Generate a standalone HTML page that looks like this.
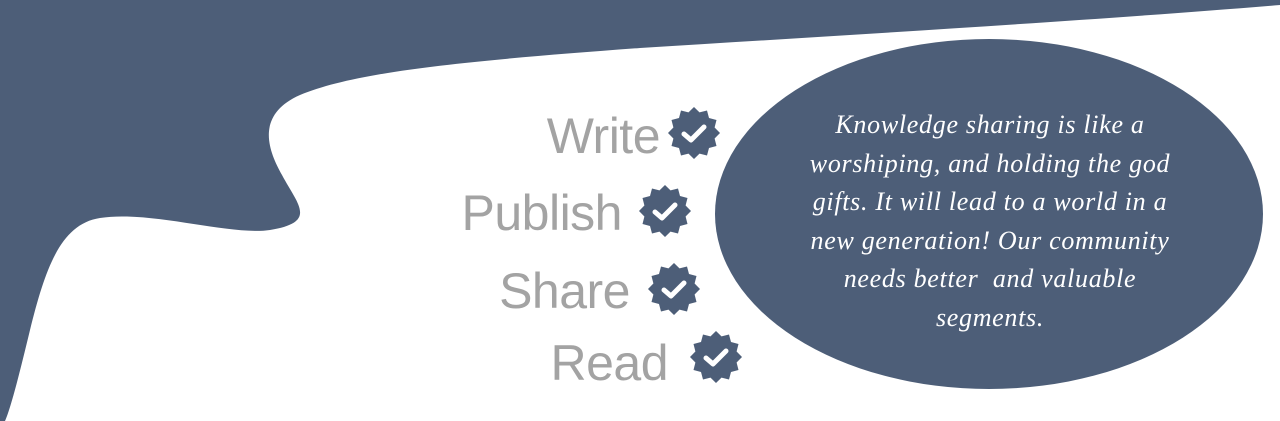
<!DOCTYPE html>
<html><head><style>
html,body{margin:0;padding:0;background:#fff;width:1280px;height:421px;overflow:hidden;position:relative;font-family:"Liberation Sans",sans-serif}
.lbl{position:absolute;color:#a3a3a3;font-size:50px;line-height:1;text-align:right;letter-spacing:-0.5px}
.q{position:absolute;left:740px;width:500px;top:106px;color:#fff;font-family:"Liberation Serif",serif;font-style:italic;font-size:26px;letter-spacing:0.7px;line-height:38.5px;text-align:center}
svg.b{position:absolute;width:52px;height:52px}
</style></head><body>
<svg width="1280" height="421" style="position:absolute;left:0;top:0">
<path fill="#4d5e78" d="M0,0 L1280,0 L1280,5 C1100,20 850,35 640,48 C480,60 360,70 300,95 C255,115 268,150 282,175 C298,205 318,222 270,230 C230,236 150,210 100,218 C60,224 45,270 30,330 C18,380 10,410 5,421 L0,421 Z"/>
<ellipse cx="989" cy="214" rx="274" ry="175" fill="#4d5e78"/>
</svg>
<div class="lbl" style="right:620px;top:111px">Write</div>
<div class="lbl" style="right:658px;top:188px">Publish</div>
<div class="lbl" style="right:650px;top:266px">Share</div>
<div class="lbl" style="right:612px;top:338px">Read</div>
<svg style="display:none"><defs><g id="bd"><polygon fill="#4d5e78" points="26,0 31.5,5.4 39,3.5 41,11 48.5,13 46.6,20.5 52,26 46.6,31.5 48.5,39 41,41 39,48.5 31.5,46.6 26,52 20.5,46.6 13,48.5 11,41 3.5,39 5.4,31.5 0,26 5.4,20.5 3.5,13 11,11 13,3.5 20.5,5.4"/><path d="M16,27 L23,33 L36,20" fill="none" stroke="#fff" stroke-width="5" stroke-linecap="round" stroke-linejoin="round"/></g></defs></svg>
<svg class="b" style="left:668px;top:107px" viewBox="0 0 52 52"><use href="#bd"/></svg>
<svg class="b" style="left:639px;top:185px" viewBox="0 0 52 52"><use href="#bd"/></svg>
<svg class="b" style="left:648px;top:263px" viewBox="0 0 52 52"><use href="#bd"/></svg>
<svg class="b" style="left:690px;top:331px" viewBox="0 0 52 52"><use href="#bd"/></svg>
<div class="q">Knowledge sharing is like a<br>worshiping, and holding the god<br>gifts. It will lead to a world in a<br>new generation! Our community<br>needs better &nbsp;and valuable<br>segments.</div>
</body></html>
